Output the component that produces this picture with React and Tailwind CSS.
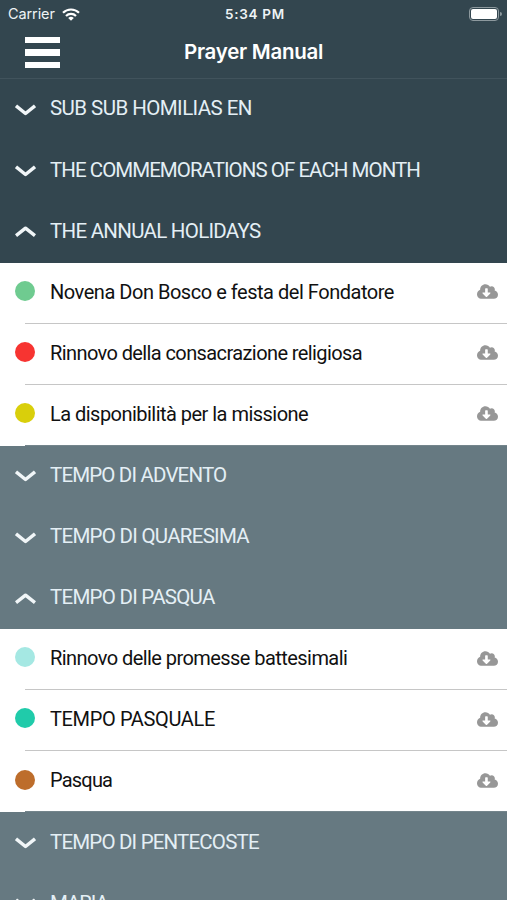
import React, { useState } from "react";
import { FaCloudDownloadAlt } from "react-icons/fa";

const sections = [
  { title: "SUB SUB HOMILIAS EN", tone: "bg-[#33464f]", tracking: "tracking-[-0.56px]", items: [] },
  { title: "THE COMMEMORATIONS OF EACH MONTH", tone: "bg-[#33464f]", tracking: "tracking-[-0.96px]", items: [] },
  {
    title: "THE ANNUAL HOLIDAYS",
    tone: "bg-[#33464f]",
    tracking: "tracking-[-0.72px]",
    items: [
      { title: "Novena Don Bosco e festa del Fondatore", dot: "bg-[#6fcb90]", tracking: "tracking-[-0.47px]" },
      { title: "Rinnovo della consacrazione religiosa", dot: "bg-[#f73431]", tracking: "tracking-[-0.6px]" },
      { title: "La disponibilità per la missione", dot: "bg-[#d9cf0b]", tracking: "tracking-[-0.53px]" },
    ],
  },
  { title: "TEMPO DI ADVENTO", tone: "bg-[#667981]", tracking: "tracking-[-0.84px]", items: [] },
  { title: "TEMPO DI QUARESIMA", tone: "bg-[#667981]", tracking: "tracking-[-0.73px]", items: [] },
  {
    title: "TEMPO DI PASQUA",
    tone: "bg-[#667981]",
    tracking: "tracking-[-0.74px]",
    items: [
      { title: "Rinnovo delle promesse battesimali", dot: "bg-[#a5e8e3]", tracking: "tracking-[-0.56px]" },
      { title: "TEMPO PASQUALE", dot: "bg-[#20cbaa]", tracking: "tracking-[-0.36px]" },
      { title: "Pasqua", dot: "bg-[#bd6d2b]", tracking: "tracking-[-0.8px]" },
    ],
  },
  { title: "TEMPO DI PENTECOSTE", tone: "bg-[#667981]", tracking: "tracking-[-0.82px]", items: [] },
  { title: "MARIA", tone: "bg-[#667981]", tracking: "tracking-[-1.1px]", items: [] },
];

const StatusBar = () => (
  <div className="grid h-7 grid-cols-3 items-center pl-2 pr-[5px] text-[13.5px] text-[#eef3f5]">
    <div className="flex items-center gap-[7px]">
      <span className="text-[14.5px] tracking-[-0.1px]">Carrier</span>
      <svg width="18" height="13" viewBox="0 0 18 13" fill="none" stroke="#fff" strokeWidth="2.2">
        <path d="M1 4.8a11.4 11.4 0 0 1 16 0" />
        <path d="M4 8a7 7 0 0 1 10 0" />
        <path d="M9 12.8 6.2 10a4 4 0 0 1 5.6 0z" fill="#fff" stroke="none" />
      </svg>
    </div>
    <span className="text-center font-semibold tracking-[0.7px]">5:34 PM</span>
    <div className="flex items-center justify-end gap-px">
      <div className="h-[14px] w-[30px] rounded-[4px] border border-[#8d999e] p-px">
        <div className="h-full rounded-[2px] bg-white" />
      </div>
      <div className="h-1 w-[2px] rounded-r bg-[#8d999e]" />
    </div>
  </div>
);

const Header = () => (
  <header className="h-[79.3px] border-b border-[#41535c] bg-[#33464f]">
    <StatusBar />
    <div className="grid h-[49px] grid-cols-[60px_1fr_60px] items-center">
      <button className="ml-[25px] flex w-[35px] flex-col gap-[6px]">
        <span className="h-[6.3px] bg-white" />
        <span className="h-[6.3px] bg-white" />
        <span className="h-[6.3px] bg-white" />
      </button>
      <h1 className="text-center text-[20.5px] font-semibold tracking-[-0.27px] text-white">
        Prayer Manual
      </h1>
    </div>
  </header>
);

const Chevron = ({ open }) => (
  <svg
    className="ml-[15px] mt-[2px]"
    width="21"
    height="12"
    viewBox="0 0 21 12"
    fill="none"
    stroke="#f1f6f8"
    strokeWidth="3.5"
    strokeLinejoin="round"
  >
    <path d={open ? "M1 9.6 10.5 2.2 20 9.6" : "M1 1.8 10.5 9.5 20 1.8"} />
  </svg>
);

const PrayerRow = ({ item, last }) => (
  <div className="flex h-[61.1px] bg-white">
    <span className={`ml-[15px] mt-[18.2px] h-5 w-5 shrink-0 rounded-full ${item.dot}`} />
    <div className="-ml-[10px] flex h-full flex-1 flex-col">
      <div className="flex flex-1 items-center pb-[2px] pl-[25px] pr-[9px]">
        <span className={`flex-1 whitespace-nowrap text-[20px] text-[#111] ${item.tracking}`}>
          {item.title}
        </span>
        <FaCloudDownloadAlt className="h-[17px] w-[21px] text-[#979797]" />
      </div>
      <div className={last ? "h-px bg-[#74858c]" : "h-px bg-[#c6c6c6]"} />
    </div>
  </div>
);

const App = () => {
  const [opened, setOpened] = useState([2, 5]);

  const toggleSection = (index) => {
    setOpened(
      opened.includes(index) ? opened.filter((i) => i !== index) : [...opened, index]
    );
  };

  return (
    <div className="h-[900px] w-[507px] overflow-hidden bg-white font-['Inter','Liberation_Sans',sans-serif]">
      <Header />
      <main className="font-['Roboto',sans-serif]">
        {sections.map((section, index) => (
          <div key={section.title}>
            <button
              onClick={() => toggleSection(index)}
              className={`flex h-[61.1px] w-full items-center gap-[14px] pb-[2px] text-left ${section.tone}`}
            >
              <Chevron open={opened.includes(index)} />
              <span className={`whitespace-nowrap text-[20.5px] text-[#e4eff5] ${section.tracking}`}>
                {section.title}
              </span>
            </button>
            {opened.includes(index) &&
              section.items.map((item, i) => (
                <PrayerRow key={item.title} item={item} last={i === section.items.length - 1} />
              ))}
          </div>
        ))}
      </main>
    </div>
  );
};

export default App;
